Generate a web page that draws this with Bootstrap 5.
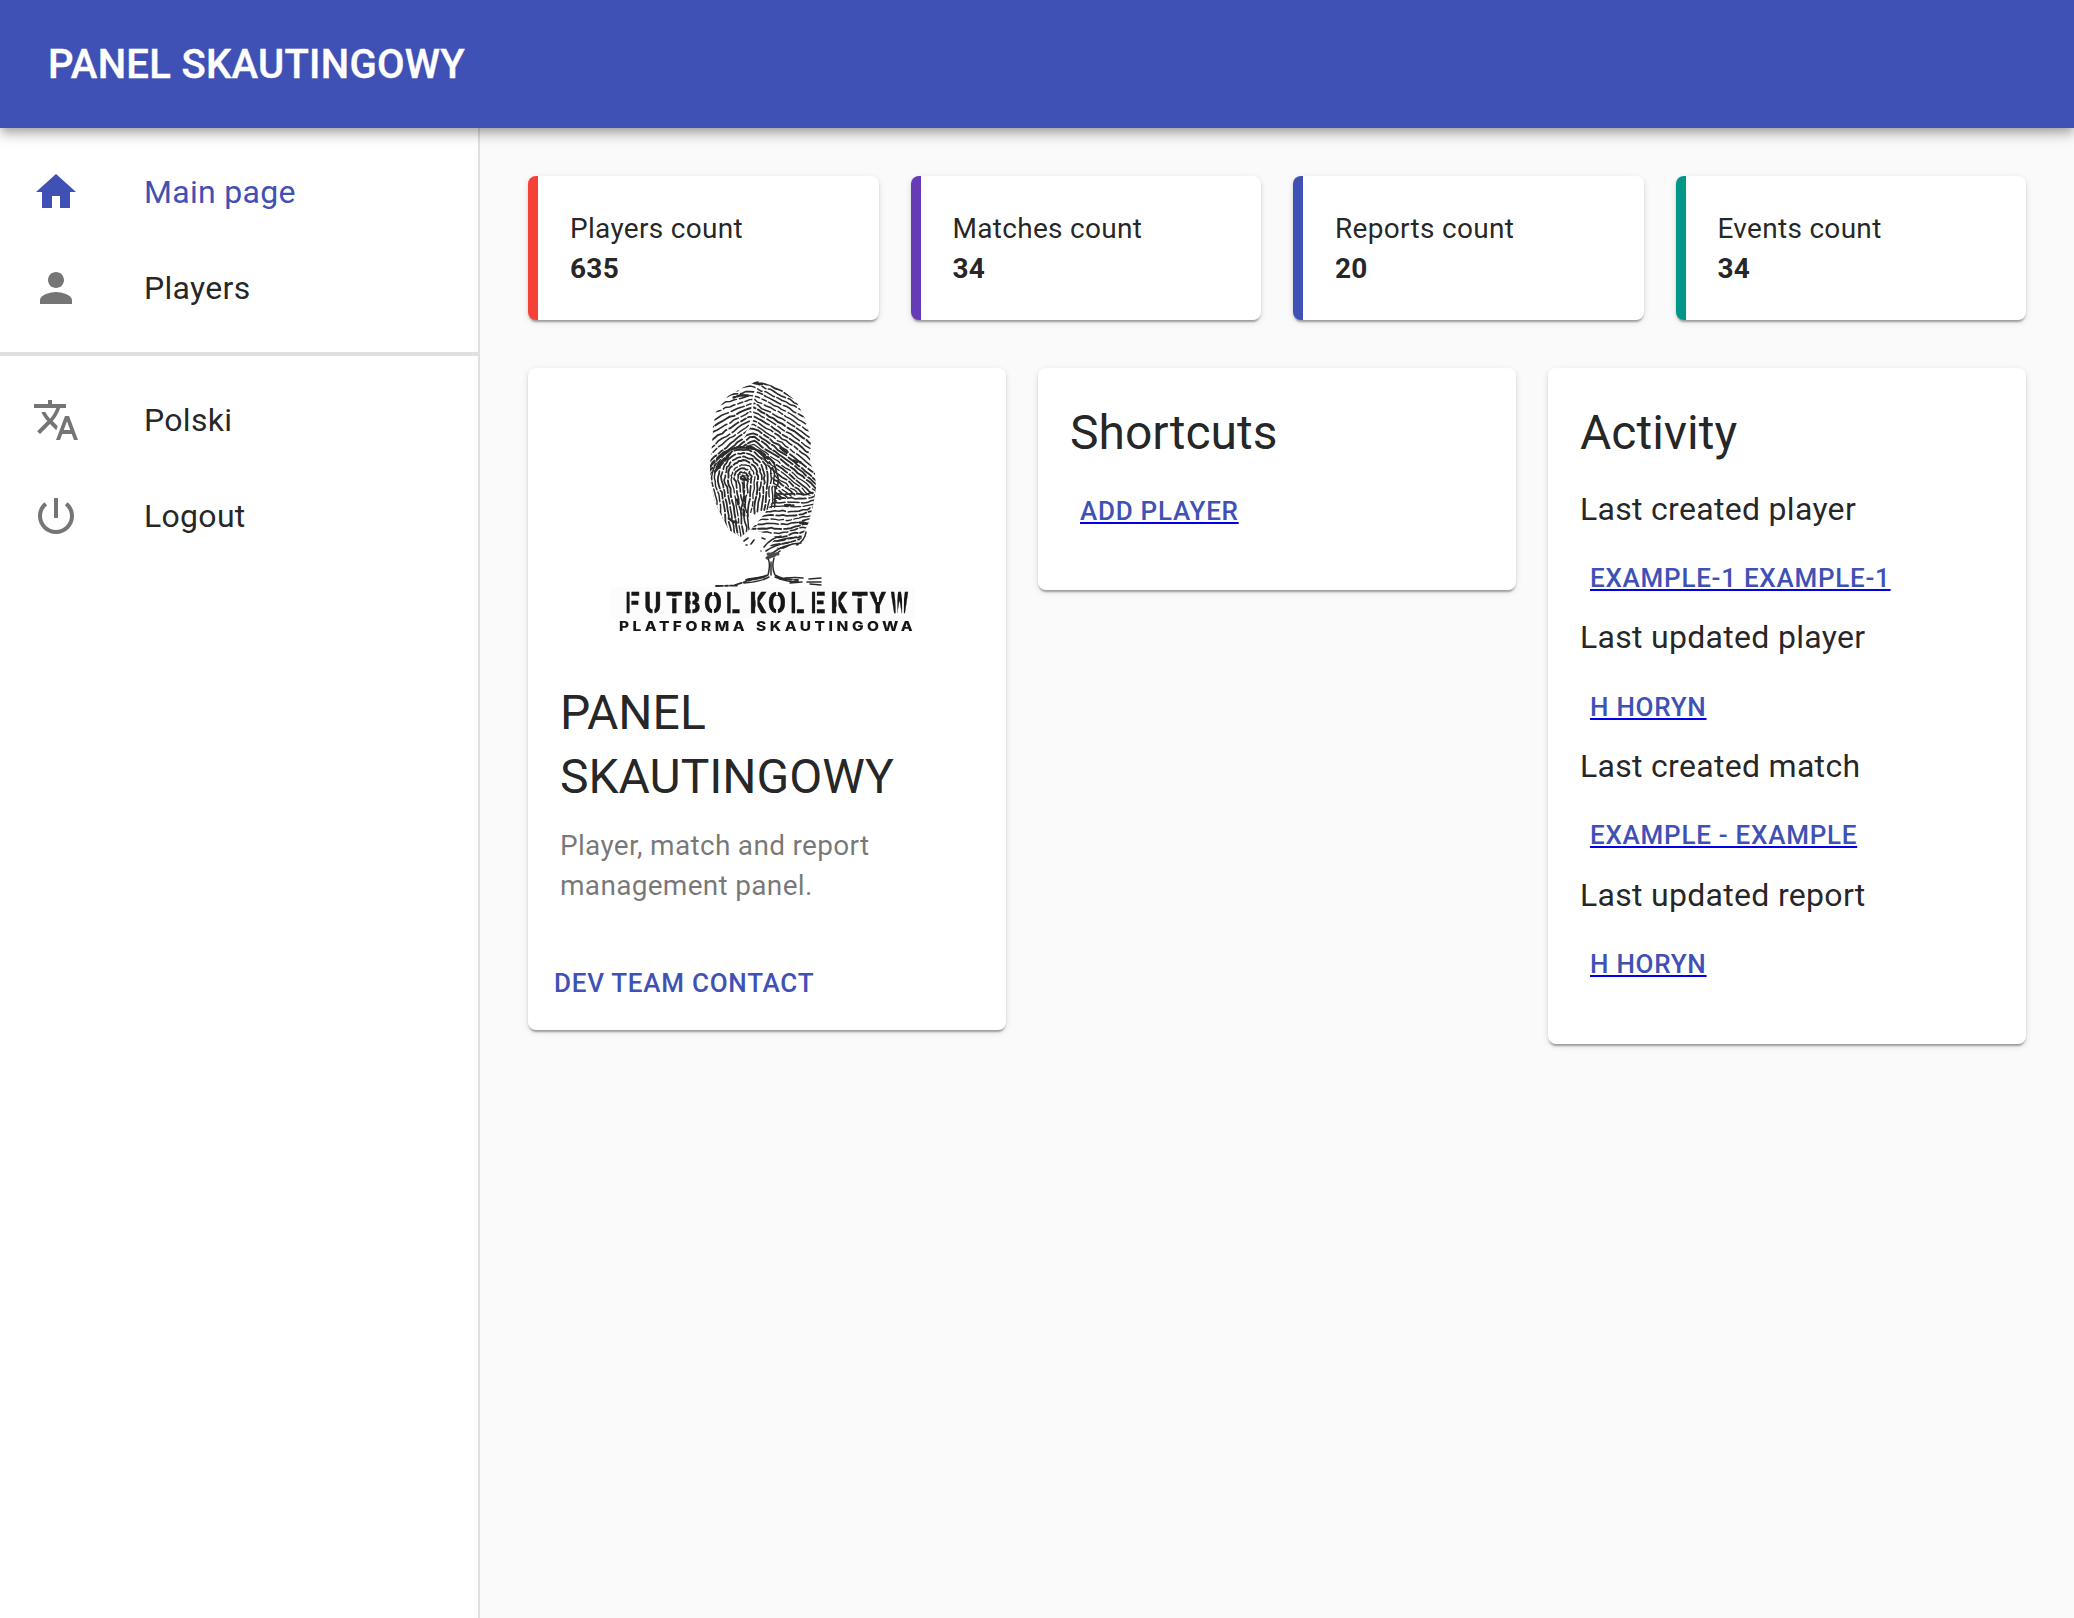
<!DOCTYPE html>
<html lang="en">
<head>
<meta charset="utf-8">
<meta name="viewport" content="width=device-width, initial-scale=1">
<title>Panel skautingowy</title>
<link href="https://cdn.jsdelivr.net/npm/bootstrap@5.3.0/dist/css/bootstrap.min.css" rel="stylesheet">
<style>
  :root { --indigo: #3f51b5; --ink: rgba(0,0,0,.87); }
  body { font-family: Roboto, "Liberation Sans", sans-serif; font-size: 32px; line-height: 1.5; letter-spacing: .3px; color: var(--ink); background: #fafafa; }
  .app-bar { height: 128px; padding: 2px 48px 0; background: var(--indigo); z-index: 10; box-shadow: 0 4px 8px -2px rgba(0,0,0,.2), 0 8px 10px 0 rgba(0,0,0,.14), 0 2px 20px 0 rgba(0,0,0,.12); }
  .app-title { font-size: 40px; font-weight: 500; line-height: 64px; letter-spacing: .3px; color: #fff; margin: 0; padding: 0; -webkit-text-stroke: .4px #fff; }
  .side { width: 480px; flex: none; background: #fff; border-right: 2px solid #e0e0e0; }
  .side-list { padding: 16px 0; }
  .side-link { height: 96px; padding: 0 32px; color: var(--ink); }
  .side-link svg { width: 48px; height: 48px; margin-right: 64px; fill: #757575; }
  .side-link.active { color: var(--indigo); }
  .side-link.active svg { fill: var(--indigo); }
  .side-rule { height: 4px; background: #e0e0e0; }
  .content { padding: 48px; min-width: 0; }
  .row-wide { --bs-gutter-x: 32px; }
  .paper { background: #fff; border: 0; border-radius: 8px; color: inherit; box-shadow: 0 4px 2px -2px rgba(0,0,0,.2), 0 2px 2px 0 rgba(0,0,0,.14), 0 2px 6px 0 rgba(0,0,0,.12); }
  .stat { height: 144px; padding: 33px 32px 31px; border-left: 10px solid; font-size: 28px; line-height: 40px; }
  .stat-red { border-color: #f44336; } .stat-purple { border-color: #673ab7; }
  .stat-indigo { border-color: #3f51b5; } .stat-teal { border-color: #009688; }
  .second { margin-top: 48px; }
  .pad { padding: 32px 32px 48px; }
  .intro { padding: 32px; }
  .heading { font-size: 48px; font-weight: 400; line-height: 64px; letter-spacing: 0; margin: 0; padding: 1px 0 15.8px; }
  .note { font-size: 28px; line-height: 40px; color: rgba(0,0,0,.54); margin: 0; padding-top: 1px; margin-bottom: -1px; }
  .act { display: inline-block; height: 61.5px; padding: 8px 10px; font-size: 26px; line-height: 45.5px; font-weight: 500; letter-spacing: .743px; color: var(--indigo); text-decoration: none; border: 0; background: none; }
  .act-line { text-decoration: underline; text-decoration-color: #00e; text-decoration-thickness: 2px; text-underline-offset: 2px; text-decoration-skip-ink: none; }
  .act:hover { color: var(--indigo); }
  .label-line { height: 67.2px; padding-top: 4px; }
  .media { display: block; width: 100%; height: 280px; }
</style>
</head>
<body>
<div class="d-flex flex-column min-vh-100">
  <header class="app-bar position-relative d-flex align-items-center"><h1 class="app-title">PANEL SKAUTINGOWY</h1></header>
  <div class="d-flex flex-grow-1">
    <nav class="side">
      <div class="side-list nav flex-column">
        <a class="side-link active d-flex align-items-center text-decoration-none" href="#"><svg viewBox="0 0 24 24"><path d="M10 20v-6h4v6h5v-8h3L12 3 2 12h3v8z"/></svg>Main page</a>
        <a class="side-link d-flex align-items-center text-decoration-none" href="#"><svg viewBox="0 0 24 24"><path d="M12 12c2.21 0 4-1.79 4-4s-1.79-4-4-4-4 1.79-4 4 1.79 4 4 4zm0 2c-2.67 0-8 1.34-8 4v2h16v-2c0-2.660-5.330-4-8-4z"/></svg>Players</a>
      </div>
      <div class="side-rule"></div>
      <div class="side-list nav flex-column">
        <a class="side-link d-flex align-items-center text-decoration-none" href="#"><svg viewBox="0 0 24 24" overflow="visible"><path d="M12.87 15.07l-2.54-2.51.03-.03c1.740-1.940 2.980-4.170 3.710-6.530H17V4h-7V2H8v2H1v1.990h11.170C11.500 7.920 10.440 9.750 9 11.350 8.070 10.320 7.300 9.190 6.690 8h-2c.73 1.630 1.730 3.170 2.980 4.560l-5.090 5.020L4 19l5-5 3.110 3.110.76-2.040zM18.500 10h-2L12 22h2l1.120-3h4.750L21 22h2l-4.500-12zm-2.620 7l1.620-4.330L19.120 17h-3.240z"/></svg>Polski</a>
        <a class="side-link d-flex align-items-center text-decoration-none" href="#"><svg viewBox="0 0 24 24"><path d="M13 3h-2v10h2V3zm4.830 2.170l-1.420 1.420C17.990 7.860 19 9.810 19 12c0 3.870-3.130 7-7 7s-7-3.130-7-7c0-2.190 1.010-4.140 2.580-5.420L6.170 5.170C4.230 6.820 3 9.260 3 12c0 4.970 4.030 9 9 9s9-4.030 9-9c0-2.740-1.230-5.180-3.170-6.830z"/></svg>Logout</a>
      </div>
    </nav>
    <main class="content flex-grow-1">
      <div class="row row-wide">
        <div class="col-3"><div class="paper stat stat-red"><div>Players count</div><div class="fw-bold">635</div></div></div>
        <div class="col-3"><div class="paper stat stat-purple"><div>Matches count</div><div class="fw-bold">34</div></div></div>
        <div class="col-3"><div class="paper stat stat-indigo"><div>Reports count</div><div class="fw-bold">20</div></div></div>
        <div class="col-3"><div class="paper stat stat-teal"><div>Events count</div><div class="fw-bold">34</div></div></div>
      </div>
      <div class="row row-wide second align-items-start">
        <div class="col-4">
          <div class="card paper">
            <svg class="media" viewBox="528 368 478 280">
              <defs>
                <clipPath id="print"><path d="M757 381 L742 388 728 396 716 412 713 425 712 445 710 465 711 485 715 502 722 517 729 530 741 537 750 529 764 533 776 537 770 546 782 550 800 540 808 524 813 506 816 488 815 473 810 463 811 440 805 418 796 401 780 388Z"/></clipPath>
                <filter id="soft"><feGaussianBlur stdDeviation=".7"/></filter>
              </defs>
              <rect x="610" y="587" width="305" height="32" fill="#fcfcfc"/>
              <g filter="url(#soft)" fill="none" stroke="#2c2c2c" stroke-linecap="round">
                <g id="ridges" clip-path="url(#print)"></g>
                <path stroke-width="1.6" d="M744 541l4-3M754 540l-3 4M746 545l1 0M762 538l3 1M761 551l0 0M764 547q7-9 17-11M766 551q10-7 22-8M771 554q13-10 30-11M777 541q14-5 24-3M768 556q6 0 12-5M797 545q8-5 9-13"/>
                <path stroke-width="3" stroke="#4c4c4c" d="M768 554l10 0M767 558l8-3"/>
                <path stroke-width="1.5" d="M768 558c3 7 1 13 0 17q-7 4-19 5M774 558c-2 7-1 13 1 17q7 4 14 4M771 562l0 13M748 579q12-1 20-4M744 583q16-1 25-6M775 577q12 5 23 5M785 578q11-1 18 0M790 583l12-1M809 579l12-1M807 582l14 0M810 584l11 1"/>
                <path stroke-width="1.8" stroke-dasharray="7 2 3 2" d="M716 586l22-.5M735 585l16-5M746 580l18-3M780 579l18 1"/>
              </g>
              <g filter="url(#soft)">
                <g id="wordmark" fill="#141414" stroke="#141414" stroke-width=".5" font-family="Roboto, sans-serif" font-weight="700" font-size="29.500" text-anchor="middle"></g>
                <path stroke="#fcfcfc" stroke-width="1.800" fill="none" d="M630.500 590v24M653.500 605v9M666 597.300h18M691.500 590v24M713 590v5M713 609v5M731.500 590v24M756.500 590v24M777 590v5M777 609v5M796 590v24M816 590v24M837.500 590v24M851 597.300h18M878 590v12M896.500 590v24M903 590v24"/>
                <g fill="#141414" font-family="Inter, sans-serif" font-weight="800" font-size="13.300"><text transform="translate(619 630.700) scale(1.16 1)" textLength="108.600">PLATFORMA</text><text transform="translate(756 630.700) scale(1.16 1)" textLength="135.300">SKAUTINGOWA</text></g>
              </g>
            </svg>
            <div class="intro"><h2 class="heading">PANEL SKAUTINGOWY</h2><p class="note">Player, match and report management panel.</p></div>
            <div class="p-3"><button class="act" type="button">DEV TEAM CONTACT</button></div>
          </div>
        </div>
        <div class="col-4"><div class="card paper pad d-block"><h2 class="heading">Shortcuts</h2><div class="d-flex"><a class="act act-line" href="#">ADD PLAYER</a></div></div></div>
        <div class="col-4">
          <div class="card paper pad d-block">
            <h2 class="heading">Activity</h2>
            <div class="label-line">Last created player</div><div class="d-flex"><a class="act act-line" href="#">EXAMPLE-1 EXAMPLE-1</a></div>
            <div class="label-line">Last updated player</div><div class="d-flex"><a class="act act-line" href="#">H HORYN</a></div>
            <div class="label-line">Last created match</div><div class="d-flex"><a class="act act-line" href="#">EXAMPLE - EXAMPLE</a></div>
            <div class="label-line">Last updated report</div><div class="d-flex"><a class="act act-line" href="#">H HORYN</a></div>
          </div>
        </div>
      </div>
    </main>
  </div>
</div>
<script src="https://cdn.jsdelivr.net/npm/bootstrap@5.3.0/dist/js/bootstrap.bundle.min.js"></script>
<script>
  const NS = 'http://www.w3.org/2000/svg';
  const ridges = document.getElementById('ridges');
  let seed = 11;
  const rnd = () => (seed = (seed * 16807) % 2147483647) / 2147483647;
  // One broken ridge line through the given points, with a little wobble.
  function ridge(points, width) {
    const p = document.createElementNS(NS, 'path');
    p.setAttribute('d', 'M' + points.map(([x, y]) => (x + (rnd() - .5) * 1.5).toFixed(1) + ' ' + (y + (rnd() - .5) * 1.5).toFixed(1)).join('L'));
    p.setAttribute('stroke-width', width || (1.3 + rnd() * .7).toFixed(2));
    p.setAttribute('stroke-dasharray', [10 + rnd() * 14, 2.8, 4 + rnd() * 9, 2.4, 15 + rnd() * 9, 3].map(n => n.toFixed(1)).join(' '));
    p.setAttribute('stroke-dashoffset', (rnd() * 30).toFixed(1));
    ridges.appendChild(p);
  }
  function blank(d) {
    const p = document.createElementNS(NS, 'path');
    p.setAttribute('d', d); p.setAttribute('fill', '#fff'); p.setAttribute('stroke', 'none');
    ridges.appendChild(p);
  }
  // Arches over the top and diagonals down the right side; the left half steepens towards the whorl.
  for (let y = 366; y < 512; y += 4.1) {
    const k = Math.max(0, Math.min(1, (y - 385) / 45)), pts = [];
    for (let x = 706; x <= 820; x += 4) {
      const t = x - 752;
      pts.push([x, y + (t < 0 ? -t * (.1 + .65 * k) + t * t * .002 : t * (.38 + .25 * k) + t * t * .002)]);
    }
    ridge(pts);
  }
  // Lower right bands, rising to the right.
  blank('M755 512L780 500 800 494 818 497 818 560 720 560 720 520Z');
  for (let y = 496; y < 560; y += 4) {
    const pts = [];
    for (let x = 735; x <= 818; x += 4) pts.push([x, y - (x - 775) * .1 + Math.sin(x / 8 + y / 11) * 1.4]);
    ridge(pts);
  }
  // Whorl: tall nested loops.
  blank('M704 494C712 464 726 449 742 448 764 449 776 475 774 498 766 516 750 530 735 545L700 545Z');
  for (let r = 2; r < 40; r += 3.8) {
    const pts = [];
    for (let a = -205; a <= 25; a += 9) {
      const t = a * Math.PI / 180;
      pts.push([743 + r * .87 * Math.cos(t), 478 + Math.min(31, r) * Math.sin(t)]);
    }
    for (let d = 6; d < 62; d += 6) {
      const [x] = pts[pts.length - 1];
      if (d < 42 - r * .5) pts.push([x - .6 + Math.sin(d / 5) * .4, 478 + r * .3 + d]);
      if (d < 60) pts.unshift([743 - r * .79 + d * .16, 478 + r * .3 + d]);
    }
    ridge(pts);
  }
  // Heavier inked patches.
  [[715, 471, 728, 457], [717, 467, 729, 454], [737, 498, 738, 506], [742, 479, 748, 481], [730, 519, 736, 523], [801, 523, 807, 523], [785, 506, 793, 505], [793, 461, 801, 463], [780, 448, 787, 453], [755, 383, 766, 384], [731, 391, 737, 390], [733, 397, 748, 395], [748, 446, 754, 448]]
    .forEach(([a, b, c, d]) => ridge([[a, b], [(a + c) / 2, (b + d) / 2], [c, d]], 2.6));
  // A pale crease down the upper part.
  const crease = document.createElementNS(NS, 'path');
  crease.setAttribute('d', 'M757 386Q750 405 753 418 749 430 743 438');
  crease.setAttribute('stroke', '#fff'); crease.setAttribute('stroke-width', '1.8');
  ridges.appendChild(crease);
  const mark = document.getElementById('wordmark');
  [['F', 632.5], ['U', 653], ['T', 674.5], ['B', 692.5], ['O', 713], ['L', 733], ['K', 758], ['O', 777], ['L', 797.5], ['E', 818], ['K', 839], ['T', 860], ['Y', 878], ['W', 899.5]].forEach(([c, x]) => {
    const t = document.createElementNS(NS, 'text');
    t.textContent = c;
    t.setAttribute('transform', `translate(${x} 612.5) scale(${c === 'W' ? .68 : .88} 1)`);
    mark.appendChild(t);
  });
</script>
</body>
</html>
